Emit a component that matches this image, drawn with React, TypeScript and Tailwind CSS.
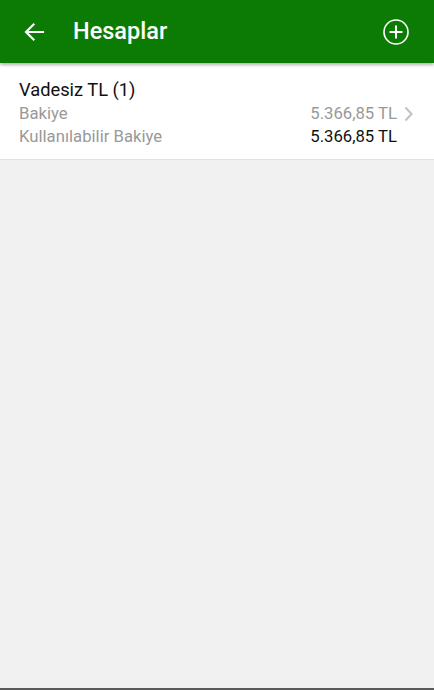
import React from "react";

export default function App() {
  return (
    <div className="w-[434px] h-[690px] flex flex-col bg-[#f1f1f1] overflow-hidden" style={{ fontFamily: "Roboto, 'Noto Sans', sans-serif" }}>
      <div className="h-[63px] shrink-0 bg-[#0b7b03] flex items-center pl-[22px] pr-[24px] shadow-[0_2px_3px_rgba(0,0,0,0.3)] relative z-10">
        <svg width="24" height="24" viewBox="0 0 24 24" className="shrink-0">
          <path d="M21 12H4.5M11.5 4.5L4 12l7.5 7.5" stroke="white" strokeWidth="2.2" fill="none" strokeLinecap="square" />
        </svg>
        <div className="ml-[27px] text-white text-[23.5px] font-medium flex-1">Hesaplar</div>
        <svg width="28" height="28" viewBox="0 0 28 28">
          <circle cx="14" cy="14" r="12" stroke="white" strokeWidth="1.6" fill="none" />
          <path d="M14 7.5v13M7.5 14h13" stroke="white" strokeWidth="2" />
        </svg>
      </div>
      <div className="bg-white border-b border-[#e2e2e2] h-[97px] shrink-0 pl-[19px] pr-[37px] pt-[16px]">
        <div className="text-[18.3px] leading-[22px] text-[#111]">Vadesiz TL (1)</div>
        <div className="flex justify-between items-center text-[16.7px] leading-[23px] text-[#999] mt-[1px]">
          <span>Bakiye</span>
          <span className="relative">
            5.366,85 TL
            <svg width="12" height="16" viewBox="0 0 12 16" className="absolute left-[calc(100%+6px)] top-[4px]">
              <path d="M2.5 1.5l6 6.5-6 6.5" stroke="#c4c4c4" strokeWidth="2.2" fill="none" />
            </svg>
          </span>
        </div>
        <div className="flex justify-between items-center text-[16.7px] leading-[23px]">
          <span className="text-[#999]">Kullanılabilir Bakiye</span>
          <span className="text-[#111]">5.366,85 TL</span>
        </div>
      </div>
      <div className="flex-1" />
      <div className="h-[2px] bg-[#5a5a5a] shrink-0" />
    </div>
  );
}
